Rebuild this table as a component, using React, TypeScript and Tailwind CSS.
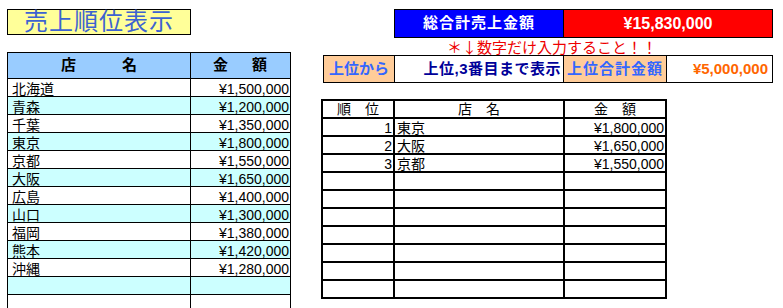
import React from "react";

const STORES: [string, string][] = [
  ["北海道", "¥1,500,000"],
  ["青森", "¥1,200,000"],
  ["千葉", "¥1,350,000"],
  ["東京", "¥1,800,000"],
  ["京都", "¥1,550,000"],
  ["大阪", "¥1,650,000"],
  ["広島", "¥1,400,000"],
  ["山口", "¥1,300,000"],
  ["福岡", "¥1,380,000"],
  ["熊本", "¥1,420,000"],
  ["沖縄", "¥1,280,000"],
  ["", ""],
  ["", ""],
];

const RANKING: [string, string, string][] = [
  ["1", "東京", "¥1,800,000"],
  ["2", "大阪", "¥1,650,000"],
  ["3", "京都", "¥1,550,000"],
  ["", "", ""],
  ["", "", ""],
  ["", "", ""],
  ["", "", ""],
  ["", "", ""],
  ["", "", ""],
  ["", "", ""],
];

export default function App() {
  return (
    <div className="w-[783px] h-[308px] overflow-hidden bg-white flex pt-[9px] pl-[7px] text-black font-['Liberation_Sans','Noto_Sans_CJK_JP',sans-serif]">
      {/* Left: title + store list */}
      <div className="w-[284px] flex flex-col">
        <div className="w-[184px] h-[30px] border border-black bg-[#ffff99] flex items-center justify-center text-[24px] leading-none tracking-[1px] text-[#3d63d1]">
          売上順位表示
        </div>

        <div className="mt-[17px] border-l border-t border-black">
          <div className="flex h-[26px] bg-[#99ccff] font-bold text-[15px]">
            <div className="w-[183px] border-r border-b border-black flex items-center justify-between pl-[53px] pr-[53px]">
              <span>店</span>
              <span>名</span>
            </div>
            <div className="w-[100px] border-r border-b border-black flex items-center justify-between pl-[22px] pr-[23px]">
              <span>金</span>
              <span>額</span>
            </div>
          </div>
          {STORES.map(([name, amount], i) => (
            <div key={i} className={`flex h-[18px] text-[14px] leading-[14px] ${i % 2 === 1 ? "bg-[#ccffff]" : "bg-white"}`}>
              <div className="w-[183px] border-r border-b border-black pl-[4px] flex items-end">{name}</div>
              <div className="w-[100px] border-r border-b border-black pr-[1px] flex items-end justify-end">{amount}</div>
            </div>
          ))}
        </div>
      </div>

      {/* Right: totals + ranking */}
      <div className="ml-[31px] flex flex-col">
        <div className="ml-[72px] h-[29px] flex border border-black text-white font-bold">
          <div className="w-[169px] bg-[#0000ff] border-r border-black flex items-center justify-center text-[15px] tracking-[1px]">
            総合計売上金額
          </div>
          <div className="w-[208px] bg-[#ff0000] flex items-center justify-center text-[16px]">
            ¥15,830,000
          </div>
        </div>

        <div className="h-[17px] pl-[125px] text-[15px] leading-[17px] text-[#ee0000] font-['Noto_Sans_CJK_JP',sans-serif]">
          ＊↓数字だけ入力すること！！
        </div>

        <div className="ml-[1px] h-[28px] flex border-l border-t border-b border-black font-bold text-[15px]">
          <div className="w-[71px] border-r border-black bg-[#ffcc99] text-[#3366ff] flex items-center justify-center">
            上位から
          </div>
          <div className="w-[169px] border-r border-black bg-white text-[#000099] flex items-center justify-end pr-[2px] tracking-[0.5px]">
            上位,3番目まで表示
          </div>
          <div className="w-[103px] border-r border-black bg-[#ffcc99] text-[#3366ff] flex items-center justify-center tracking-[1px]">
            上位合計金額
          </div>
          <div className="w-[106px] border-r border-black bg-white text-[#ff6600] flex items-center justify-end pr-[4px]">
            ¥5,000,000
          </div>
        </div>

        <div className="mt-[16px] -ml-[1px] w-[346px] border-l-2 border-t-2 border-black text-[14px]">
          <div className="flex h-[18px] leading-[15px]">
            <div className="w-[72px] border-r-2 border-b-2 border-black flex items-end justify-center">順　位</div>
            <div className="w-[170px] border-r-2 border-b-2 border-black flex items-end justify-center">店　名</div>
            <div className="w-[102px] border-r-2 border-b-2 border-black flex items-end justify-center">金　額</div>
          </div>
          {RANKING.map(([rank, name, amount], i) => (
            <div key={i} className="flex h-[18px] leading-[14px]">
              <div className="w-[72px] border-r-2 border-b-2 border-black flex items-end justify-end pr-[1px]">{rank}</div>
              <div className="w-[170px] border-r-2 border-b-2 border-black flex items-end pl-[2px]">{name}</div>
              <div className="w-[102px] border-r-2 border-b-2 border-black flex items-end justify-end pr-[1px]">{amount}</div>
            </div>
          ))}
        </div>
      </div>
    </div>
  );
}
